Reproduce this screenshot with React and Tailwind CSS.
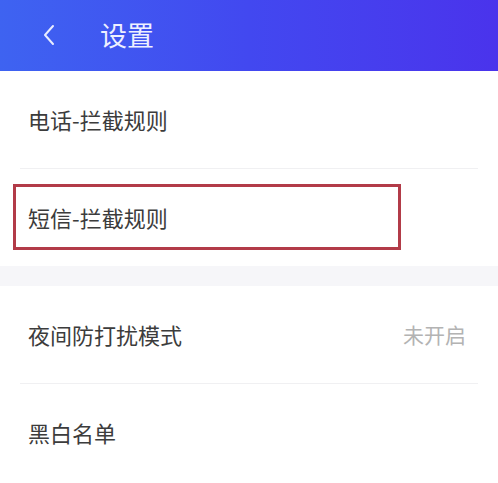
const font = { fontFamily: '"Noto Sans CJK SC", "Noto Sans", sans-serif' }

function Row({ label, value, children }) {
  return (
    <div className="relative flex h-[97px] items-center justify-between pl-[28px] pr-[32px]">
      <span className="text-[22px] text-[#3c3c3c]">{label}</span>
      {value && <span className="text-[21px] text-[#b3b3b3]">{value}</span>}
      {children}
    </div>
  )
}

function Divider() {
  return <div className="mx-[20px] h-px bg-[#f0f0f2]" />
}

export default function App() {
  return (
    <div className="w-[498px] h-[483px] overflow-hidden bg-white" style={font}>
      <div className="flex h-[71px] items-center bg-gradient-to-r from-[#3e63f1] via-[#4248f0] to-[#4a33ec] pb-[2px]">
        <svg className="ml-[42px]" width="14" height="22" viewBox="0 0 14 22" fill="none">
          <path d="M11 2 L3 11 L11 20" stroke="#e8ecff" strokeWidth="2" strokeLinecap="round" strokeLinejoin="round" />
        </svg>
        <span className="ml-[44px] text-[27px] leading-none text-[#eef0ff]">设置</span>
      </div>

      <Row label="电话-拦截规则" />
      <Divider />
      <Row label="短信-拦截规则">
        <div className="absolute left-[13px] top-[15px] h-[66px] w-[388px] border-[3px] border-[#b23b48]" />
      </Row>

      <div className="h-[20px] bg-[#f6f6f9]" />

      <Row label="夜间防打扰模式" value="未开启" />
      <Divider />
      <Row label="黑白名单" />
    </div>
  )
}
